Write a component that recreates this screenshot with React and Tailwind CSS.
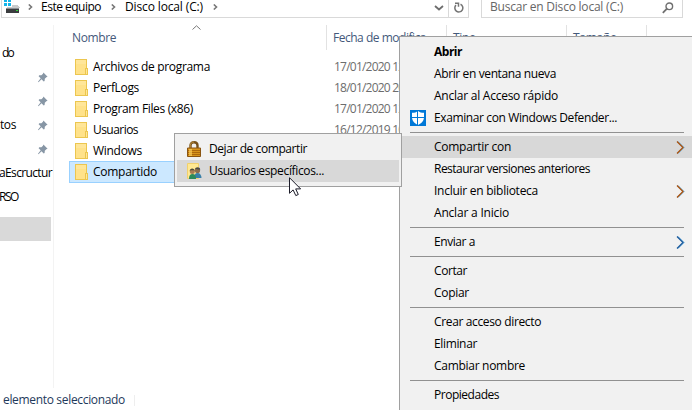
import React, { useLayoutEffect, useRef, useState } from "react";

// Text label whose tracking is adjusted so that it spans exactly `w` pixels.
function Label({ w, className = "", children }) {
  const ref = useRef(null);
  const [spacing, setSpacing] = useState(0);
  useLayoutEffect(() => {
    const natural = ref.current.getBoundingClientRect().width - spacing * children.length;
    setSpacing((w - 1 - natural) / children.length);
  }, [w, children]);
  return (
    <span ref={ref} style={{ letterSpacing: spacing }} className={`inline-block shrink-0 whitespace-pre ${className}`}>
      {children}
    </span>
  );
}

const files = [
  ["Archivos de programa", 118, "17/01/2020 12:30"],
  ["PerfLogs", 47, "18/01/2020 20:15"],
  ["Program Files (x86)", 101, "17/01/2020 12:30"],
  ["Usuarios", 46, "16/12/2019 10:42"],
  ["Windows", 50, ""],
  ["Compartido", 65, ""],
];

const side = [
  { text: "do", w: 14, pad: "pl-[2px]" },
  { pin: true },
  { pin: true },
  { text: "tos", w: 17, pin: true },
  { pin: true },
  { text: "aEscructur", w: 54, pad: "-ml-[1px]" },
  { text: "RSO", w: 20, pad: "-ml-[1px]" },
  { active: true },
];

const menu = [
  [
    { text: "Abrir", w: 29, bold: true },
    { text: "Abrir en ventana nueva", w: 123 },
    { text: "Anclar al Acceso rápido", w: 125 },
    { text: "Examinar con Windows Defender...", w: 184, shield: true },
  ],
  [
    { text: "Compartir con", w: 78, arrow: "warm", active: true },
    { text: "Restaurar versiones anteriores", w: 157 },
    { text: "Incluir en biblioteca", w: 105, arrow: "warm" },
    { text: "Anclar a Inicio", w: 76 },
  ],
  [{ text: "Enviar a", w: 42, arrow: "cool" }],
  [
    { text: "Cortar", w: 34 },
    { text: "Copiar", w: 36 },
  ],
  [
    { text: "Crear acceso directo", w: 108 },
    { text: "Eliminar", w: 44 },
    { text: "Cambiar nombre", w: 92 },
  ],
  [{ text: "Propiedades", w: 66 }],
];

function Drive() {
  return (
    <svg width="18" height="13" viewBox="0 0 18 13" className="shrink-0" shapeRendering="crispEdges">
      <path d="M0 0h3v2H0zM4 0h3v2H4zM0 3h3v3H0zM4 3h3v3H4z" fill="#12b5ea" />
      <path d="M8 5h6l2 3H2l1-1h5z" fill="#c9cbcc" />
      <path d="M2 9h13v4H2z" fill="#3b3d3f" />
      <path d="M2 8h13v1H2z" fill="#8d9194" />
      <path d="M12 10h2v1h-2z" fill="#35d13a" />
    </svg>
  );
}

function Crumb() {
  return (
    <svg width="5" height="6" viewBox="0 0 5 6" className="shrink-0">
      <path d="M.8.5 3.5 3 .8 5.5" fill="none" stroke="#777" strokeWidth="1.6" />
    </svg>
  );
}

function Folder() {
  return (
    <svg width="13" height="16" viewBox="0 0 13 16" className="shrink-0" shapeRendering="crispEdges">
      <path d="M0 0h12v9h1v7H0z" fill="#ecc64f" />
      <path d="M1 1h10v8h-1v6H1z" fill="#ffe28a" />
      <path d="M1 1h10v4H1z" fill="#ffe699" />
      <path d="M11 10h1v5h-1z" fill="#ffe797" />
    </svg>
  );
}

function Pin() {
  return (
    <svg width="10" height="11" viewBox="0 0 10 11" className="shrink-0">
      <path d="M5.4.5 9.6 4.7 8.3 5.2 6.8 6.8 6.6 9 5.7 9.5 3.5 7.2.5 10.2 0 9.8 2.7 6.3.6 4.2 1.2 3.3 3.4 3.2 5 1.7z" fill="#8796a5" />
    </svg>
  );
}

function Shield() {
  return (
    <svg width="16" height="16" viewBox="0 0 16 16">
      <path d="M0 0h16v16H0z" fill="#0078d7" />
      <path d="M8 1c1.6 1.3 3.5 1.8 6 1.8V7c0 3.8-2.3 6.2-6 8-3.7-1.8-6-4.2-6-8V2.8C4.5 2.8 6.4 2.3 8 1z" fill="#fff" />
      <path d="M7 1h1v14H7zM2 7h12v1H2z" fill="#0078d7" />
    </svg>
  );
}

function Arrow({ cool }) {
  return (
    <svg width="9" height="13" viewBox="0 0 9 13" className="shrink-0">
      <path d="M2 .5 8 6.5 2 12.5" fill="none" stroke="#4fa5e0" strokeWidth="1" />
      <path d="M1 .5 7 6.5 1 12.5" fill="none" stroke={cool ? "#1c5a9c" : "#a8500c"} strokeWidth="1.3" />
    </svg>
  );
}

function Lock() {
  return (
    <svg width="14" height="16" viewBox="0 0 14 16">
      <path d="M3.5 8V4.5C3.5 2.3 4.8 1.2 7 1.2s3.5 1.1 3.5 3.3V8" fill="none" stroke="#76501a" strokeWidth="2.4" />
      <path d="M3.3 7V4.3C3.3 2.2 4.8 1.1 7 1.1" fill="none" stroke="#c99a45" strokeWidth=".8" />
      <path d="M.5 7h13v8.5H.5z" fill="#d8941c" stroke="#8a5512" />
      <path d="M1 9.5h12M1 11.5h12M1 13.5h12" stroke="#a7640d" strokeWidth=".9" />
      <path d="M2 8h3v7H2z" fill="#ffd463" opacity=".65" />
    </svg>
  );
}

function Users() {
  return (
    <svg width="15" height="16" viewBox="0 0 15 16">
      <path d="M.5.5h11v15H.5z" fill="#ffe893" stroke="#f0d06c" />
      <path d="M7 15c0-3 1-5 3.5-5s4 2 4 5z" fill="#397fa8" />
      <circle cx="10.5" cy="7.5" r="2.6" fill="#8b6c4b" />
      <path d="M8 6.5c0-3 5-3 5.3 0l-1 .2-3-.7z" fill="#4b4a45" />
      <path d="M2 16c0-3.5 1-5 3.500-5S9 12.500 9 16z" fill="#2d8a5a" />
      <circle cx="5.3" cy="8.5" r="2.5" fill="#a97b52" />
      <path d="M2.7 8c0-3.5 5-3.3 5.2 0l-1-.8-3 .1z" fill="#4c4b3c" />
    </svg>
  );
}

function ContextRow({ item }) {
  return (
    <div className={`flex h-[22px] items-center pr-[9px] ${item.active ? "bg-[#d8d8d8]" : ""}`}>
      <div className="flex w-[32px] shrink-0 justify-start pl-[8px]">{item.shield && <Shield />}</div>
      <Label w={item.w} className={item.bold ? "font-bold" : ""}>{item.text}</Label>
      <div className="grow" />
      {item.arrow && <Arrow cool={item.arrow === "cool"} />}
    </div>
  );
}

export default function App() {
  return (
    <div className="relative flex h-[410px] w-[692px] flex-col overflow-hidden bg-white font-['Open_Sans','Noto_Sans',sans-serif] text-[12px] leading-[16px] text-black">
      <header className="flex h-[25px] shrink-0 items-start pl-[1px] leading-[12px]">
        <div className="flex h-[18px] w-[468px] shrink-0 border-x border-b border-[#d9d9d9]">
          <div className="flex h-[13px] grow items-center pl-[2px]">
            <Drive />
            <div className="ml-[6px]"><Crumb /></div>
            <Label w={61} className="ml-[8px]">Este equipo</Label>
            <div className="ml-[10px]"><Crumb /></div>
            <Label w={79} className="ml-[9px]">Disco local (C:)</Label>
            <div className="ml-[10px]"><Crumb /></div>
            <div className="grow" />
            <svg width="10" height="6" viewBox="0 0 10 6" className="mr-[4px] mt-[3px]">
              <path d="M1 1l4 3.5L9 1" fill="none" stroke="#6d6d6d" strokeWidth="1.8" />
            </svg>
          </div>
          <div className="flex w-[20px] justify-center border-l border-[#d9d9d9] pt-[2px]">
            <svg width="10" height="11" viewBox="0 0 10 11">
              <path d="M6.5 2.3A4 4 0 1 1 2 3.1M1 1.2h3.5v3.5" fill="none" stroke="#747474" strokeWidth="1.5" />
            </svg>
          </div>
        </div>
        <div className="ml-[12px] flex h-[18px] w-[202px] border-x border-b border-[#d9d9d9] pl-[8px]">
          <div className="flex h-[14px] grow items-center text-[#666]">
            <Label w={134}>Buscar en Disco local (C:)</Label>
          </div>
          <svg width="12" height="12" viewBox="0 0 12 12" className="mr-[8px] mt-[2px]">
            <circle cx="7.3" cy="4.3" r="3.3" fill="none" stroke="#6f6f6f" strokeWidth="1.4" />
            <path d="M5 6.7.8 10.8" stroke="#6f6f6f" strokeWidth="1.8" />
          </svg>
        </div>
      </header>

      <div className="flex h-[363px] shrink-0">
        <nav className="flex w-[54px] shrink-0 flex-col overflow-hidden border-r border-[#f3f3f3] pr-[2px] pt-[16px]">
          {side.map((s, i) => (
            <div key={i} className={`flex h-[24px] shrink-0 items-center justify-between ${s.active ? "mt-[8px] bg-[#d9d9d9]" : ""}`}>
              {s.text ? <Label w={s.w} className={s.pad || ""}>{s.text}</Label> : <span />}
              {s.pin && <div className="mr-[3px]"><Pin /></div>}
            </div>
          ))}
        </nav>

        <main className="flex grow flex-col">
          <div className="flex h-[25px] shrink-0 text-[#44597b]">
            <div className="flex w-[273px] items-center border-r border-[#e2e2e2] pl-[18px]">
              <Label w={45}>Nombre</Label>
              <svg width="9" height="5" viewBox="0 0 9 5" className="ml-[76px] self-start">
                <path d="M.5 4.5l4-3.7 4 3.7" fill="none" stroke="#777" />
              </svg>
            </div>
            <div className="flex w-[120px] items-center border-r border-[#e2e2e2] pl-[6px]"><Label w={102}>Fecha de modifica...</Label></div>
            <div className="flex w-[120px] items-center border-r border-[#e2e2e2] pl-[6px]"><Label w={24}>Tipo</Label></div>
            <div className="flex w-[80px] items-center border-r border-[#e2e2e2] pl-[6px]"><Label w={45}>Tamaño</Label></div>
          </div>
          <div className="mt-[6px] flex flex-col">
            {files.map(([name, w, date], i) => (
              <div key={name} className={`ml-[15px] flex items-center ${i === 5 ? "h-[22px] border border-[#99d1ff] bg-[#cce8ff] pl-[5px]" : "h-[21px] pl-[6px]"}`}>
                <Folder />
                <Label w={w} className="ml-[5px]">{name}</Label>
                <div className="grow" />
                <div className="w-[358px] shrink-0 text-[#6d6d6d]">{date && <Label w={86}>{date}</Label>}</div>
              </div>
            ))}
          </div>
        </main>
      </div>

      <footer className="flex h-[22px] shrink-0 items-center pl-[3px] pt-[2px] text-[#1e395b]">
        <Label w={123}>elemento seleccionado</Label>
        <div className="ml-[9px] h-[11px] w-px bg-[#eee]" />
      </footer>

      <div className="absolute left-[399px] top-[36px] flex h-[380px] w-[296px] flex-col border border-[#a0a0a0] bg-[#f1f1f1] pl-[2px] pt-[4px]">
        {menu.map((group, g) => (
          <React.Fragment key={g}>
            {g > 0 && <div className="my-[3px] ml-[8px] h-px w-[274px] shrink-0 bg-[#919191]" />}
            {group.map((item) => <ContextRow key={item.text} item={item} />)}
          </React.Fragment>
        ))}
      </div>

      <div className="absolute left-[174px] top-[133px] flex h-[54px] w-[228px] flex-col border border-[#a0a0a0] bg-[#f1f1f1] px-[2px] pt-[4px]">
        <div className="flex h-[22px] items-center pl-[10px]">
          <Lock />
          <Label w={99} className="ml-[8px]">Dejar de compartir</Label>
        </div>
        <div className="flex h-[22px] items-center bg-[#d8d8d8] pl-[10px]">
          <Users />
          <Label w={116} className="ml-[7px]">Usuarios específicos...</Label>
        </div>
      </div>

      <svg width="13" height="20" viewBox="0 0 13 20" className="absolute left-[289px] top-[177px]">
        <path d="M.5.7v15.6l3.6-3.4 2.7 5.7 2.5-1.1-2.6-5.6h4.9z" fill="#fff" stroke="#1b1b28" />
      </svg>
    </div>
  );
}
